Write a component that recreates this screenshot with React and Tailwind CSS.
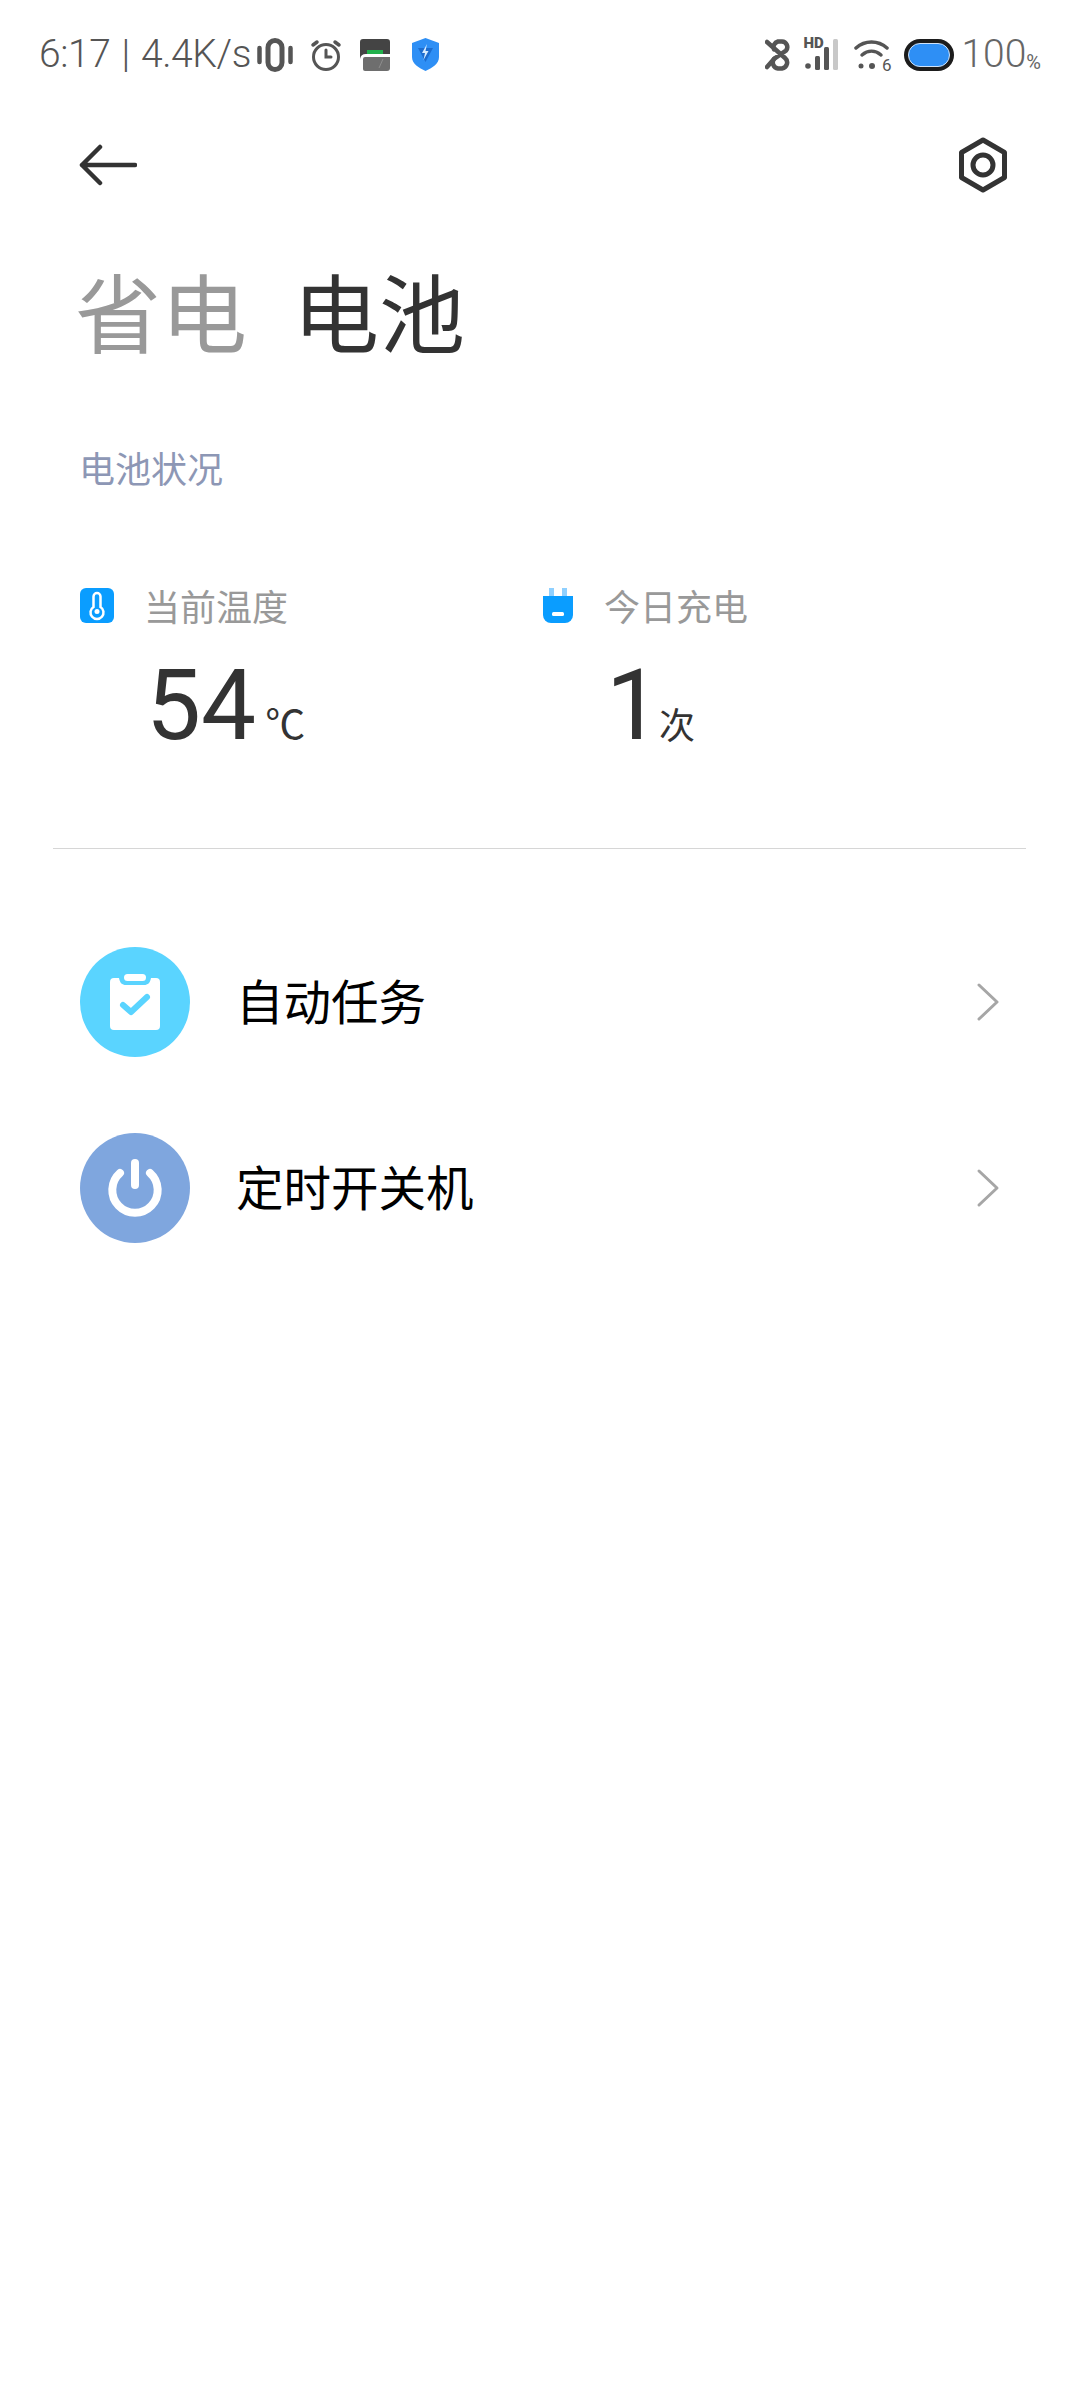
import React from 'react';

const CJK = "font-['Noto_Sans_CJK_SC',sans-serif]";

function Vibrate() {
  return (
    <svg width="36" height="34" viewBox="0 0 36 34" fill="none" stroke="#555" strokeLinecap="round">
      <path d="M2.5 10v14M33.500 10v14" strokeWidth="4.500" />
      <rect x="11" y="2.500" width="14" height="29" rx="7" strokeWidth="5" />
    </svg>
  );
}

function Alarm() {
  return (
    <svg width="32" height="34" viewBox="0 0 32 34" fill="none" stroke="#555" strokeLinecap="round">
      <circle cx="16" cy="19" r="12.500" strokeWidth="3" />
      <path d="M16 12v7h5" strokeWidth="3" />
      <path d="M3 7l4-3M29 7l-4-3" strokeWidth="3.500" />
    </svg>
  );
}

function Wallet() {
  return (
    <svg width="30" height="32" viewBox="0 0 30 32">
      <path d="M3 0h24a3 3 0 0 1 3 3v12H6a6 6 0 0 0-6 5V3a3 3 0 0 1 3-3z" fill="#444" />
      <rect x="7" y="11" width="16" height="4" fill="#22b14c" />
      <path d="M3 20a2 2 0 0 1 2-2h25v11a3 3 0 0 1-3 3H5a2 2 0 0 1-2-2z" fill="#6e6e6e" />
      <path d="M19 29l4-9" stroke="#8d8d8d" strokeWidth="1" />
    </svg>
  );
}

function Shield() {
  return (
    <svg width="29" height="33" viewBox="0 0 29 33">
      <path d="M14.500 0L28 5v14c0 7-7 11-13.500 14C8 30 1 26 1 19V5z" fill="#2e8ff5" />
      <path d="M7 10h15l-7.500 14z" fill="#1c6ccf" />
      <path d="M16 6l-5 9h3l-1.500 7 5-9h-3z" fill="#d6ebff" />
    </svg>
  );
}

function Bluetooth() {
  return (
    <svg width="27" height="32" viewBox="0 0 27 32" fill="none" stroke="#555" strokeWidth="4.500" strokeLinecap="round">
      <path d="M2 3l18 16a6 6 0 0 1-3 10.500h-4a6 6 0 0 1-4-9.500l12-8.500a5.500 5.500 0 0 0-4-9h-4a6 6 0 0 0-4 8" />
      <path d="M9 20L2 28" />
    </svg>
  );
}

function Signal() {
  return (
    <div className="relative h-[32px] w-[36px]">
      <span className="absolute left-0 top-[-3px] font-['Roboto',sans-serif] text-[15px] font-black leading-[14px] text-[#555]">HD</span>
      <svg className="absolute left-0 top-0" width="36" height="32" viewBox="0 0 36 32">
        <circle cx="5" cy="27" r="2.800" fill="#555" />
        <rect x="12" y="17" width="5" height="14" rx="1.500" fill="#555" />
        <rect x="21" y="8" width="5" height="23" rx="1.500" fill="#555" />
        <rect x="30" y="0" width="5" height="31" rx="1.500" fill="#c8c8c8" />
      </svg>
    </div>
  );
}

function Wifi() {
  return (
    <div className="relative h-[32px] w-[36px]">
      <svg width="36" height="32" viewBox="0 0 36 32" fill="none" stroke="#555" strokeLinecap="round" strokeWidth="3.500">
        <path d="M2 9c9-8 22-8 31 0" />
        <path d="M8 16c6-5 13-5 19 0" />
        <circle cx="7" cy="27" r="2.500" fill="#555" stroke="none" />
        <circle cx="18" cy="27" r="3" fill="#555" stroke="none" />
      </svg>
      <span className="absolute right-[-1px] top-[17px] font-['Roboto',sans-serif] text-[17px] leading-[18px] text-[#555]">6</span>
    </div>
  );
}

function Battery() {
  return (
    <div className="flex h-[32px] w-[50px] items-center rounded-full bg-[#1c1c1c] p-[4px]">
      <div className="h-full w-full rounded-full border border-[#cfe3fa] bg-[#2e8ff5]" />
    </div>
  );
}

function StatusBar() {
  return (
    <div className="flex h-[108px] items-center justify-between pl-[39px] pr-[39px] pt-[1px] font-['Roboto',sans-serif] text-[#555]">
      <div className="flex items-center">
        <span className="w-[218px] whitespace-nowrap text-[39px] font-light leading-none tracking-[-0.4px] [word-spacing:2px]">6:17 | 4.4K/s</span>
        <Vibrate />
        <div className="ml-[17px]"><Alarm /></div>
        <div className="ml-[18px]"><Wallet /></div>
        <div className="ml-[21px]"><Shield /></div>
      </div>
      <div className="flex items-center">
        <Bluetooth />
        <div className="ml-[11px]"><Signal /></div>
        <div className="ml-[15px]"><Wifi /></div>
        <div className="ml-[14px]"><Battery /></div>
        <span className="ml-[7px] text-[39px] font-light leading-none text-[#666]">100</span>
        <span className="self-end text-[20px] leading-[24px] text-[#666]">%</span>
      </div>
    </div>
  );
}

function Header() {
  return (
    <div className="flex h-[112px] items-center justify-between pl-[79px] pr-[71px] pt-[2px]">
      <svg width="58" height="42" viewBox="0 0 58 42" fill="none" stroke="#333" strokeWidth="4.500" strokeLinecap="round" strokeLinejoin="round">
        <path d="M21 3L3 21l18 18M3 21h53" />
      </svg>
      <svg width="52" height="56" viewBox="0 0 52 56" fill="none" stroke="#333">
        <path d="M26 3l21.500 12.500v25L26 53 4.500 40.500v-25z" strokeWidth="5" strokeLinejoin="round" />
        <circle cx="26" cy="28" r="10" strokeWidth="5" />
      </svg>
    </div>
  );
}

function Stat({ icon, label, value, unit, unitClass }) {
  return (
    <div className="w-[460px]">
      <div className="flex h-[40px] items-center">
        <div className="flex w-[64px] items-center">{icon}</div>
        <span className="text-[36px] leading-none text-[#999]">{label}</span>
      </div>
      <div className="mt-[31px] flex items-baseline pl-[66px]">
        <span className="font-['Roboto',sans-serif] text-[98px] leading-[100px] text-[#333]">{value}</span>
        <span className={`leading-none text-[#333] ${unitClass}`}>{unit}</span>
      </div>
    </div>
  );
}

function MenuRow({ color, icon, label }) {
  return (
    <div className="flex h-[110px] items-center justify-between pl-[80px] pr-[80px]">
      <div className="flex items-center">
        <div className={`flex h-[110px] w-[110px] items-center justify-center rounded-full ${color}`}>{icon}</div>
        <span className="ml-[46px] pb-[4px] text-[47.5px] leading-none text-black">{label}</span>
      </div>
      <svg width="24" height="40" viewBox="0 0 24 40" fill="none" stroke="#a6a6a6" strokeWidth="3" strokeLinecap="round" strokeLinejoin="round">
        <path d="M3 3l18 17L3 37" />
      </svg>
    </div>
  );
}

export default function App() {
  return (
    <div className={`h-[2400px] w-[1080px] overflow-hidden bg-white ${CJK}`}>
      <StatusBar />
      <Header />

      <div className="mt-[45px] flex pl-[75px] text-[86px] leading-[90px]">
        <span className="text-[#999]">省电</span>
        <span className="ml-[46px] text-[#333]">电池</span>
      </div>

      <div className="mt-[87px] pl-[79px] text-[36px] leading-[50px] text-[#8d97b5]">电池状况</div>

      <div className="mt-[93px] flex pl-[80px]">
        <Stat
          label="当前温度"
          value="54"
          unit="℃"
          unitClass="ml-[9px] text-[40px]"
          icon={
            <svg width="34" height="35" viewBox="0 0 34 35">
              <rect width="34" height="35" rx="6" fill="#0a9dff" />
              <path d="M13.500 7.500a3.500 3.500 0 0 1 7 0v10.500a6.500 6.500 0 1 1-7 0z" fill="none" stroke="#fff" strokeWidth="2.500" transform="translate(0 1)" />
              <circle cx="17" cy="23.500" r="2.500" fill="#fff" />
            </svg>
          }
        />
        <Stat
          label="今日充电"
          value="1"
          unit="次"
          unitClass="ml-[-2px] text-[36px]"
          icon={
            <svg className="ml-[3px]" width="30" height="35" viewBox="0 0 30 35">
              <rect x="6" y="0" width="5" height="10" fill="#8fd0ff" />
              <rect x="19" y="0" width="5" height="10" fill="#8fd0ff" />
              <path d="M0 8h30v19a8 8 0 0 1-8 8H8a8 8 0 0 1-8-8z" fill="#0a9dff" />
              <rect x="9" y="24" width="12" height="4" rx="1.500" fill="#fff" />
            </svg>
          }
        />
      </div>

      <div className="ml-[53px] mt-[92px] h-[1px] w-[973px] bg-[#d6d6d6]" />

      <div className="mt-[98px] flex flex-col gap-[76px]">
        <MenuRow
          color="bg-[#5ad4ff]"
          label="自动任务"
          icon={
            <svg width="50" height="56" viewBox="0 0 50 56">
              <path d="M4 4h5c1 5 3 7 7 7h18c4 0 6-2 7-7h5a4 4 0 0 1 4 4v44a4 4 0 0 1-4 4H4a4 4 0 0 1-4-4V8a4 4 0 0 1 4-4z" fill="#fff" />
              <rect x="14" y="0" width="22" height="7" rx="3.500" fill="#fff" />
              <path d="M13 31l8 7 16-15" fill="none" stroke="#5ad4ff" strokeWidth="6" strokeLinecap="round" strokeLinejoin="round" />
            </svg>
          }
        />
        <MenuRow
          color="bg-[#7fa6de]"
          label="定时开关机"
          icon={
            <svg width="56" height="58" viewBox="0 0 56 58" fill="none" stroke="#fff" strokeLinecap="round">
              <path d="M28 4v22" strokeWidth="8" />
              <path d="M13 14a22.700 22.700 0 1 0 30 0" strokeWidth="8" />
            </svg>
          }
        />
      </div>
    </div>
  );
}
